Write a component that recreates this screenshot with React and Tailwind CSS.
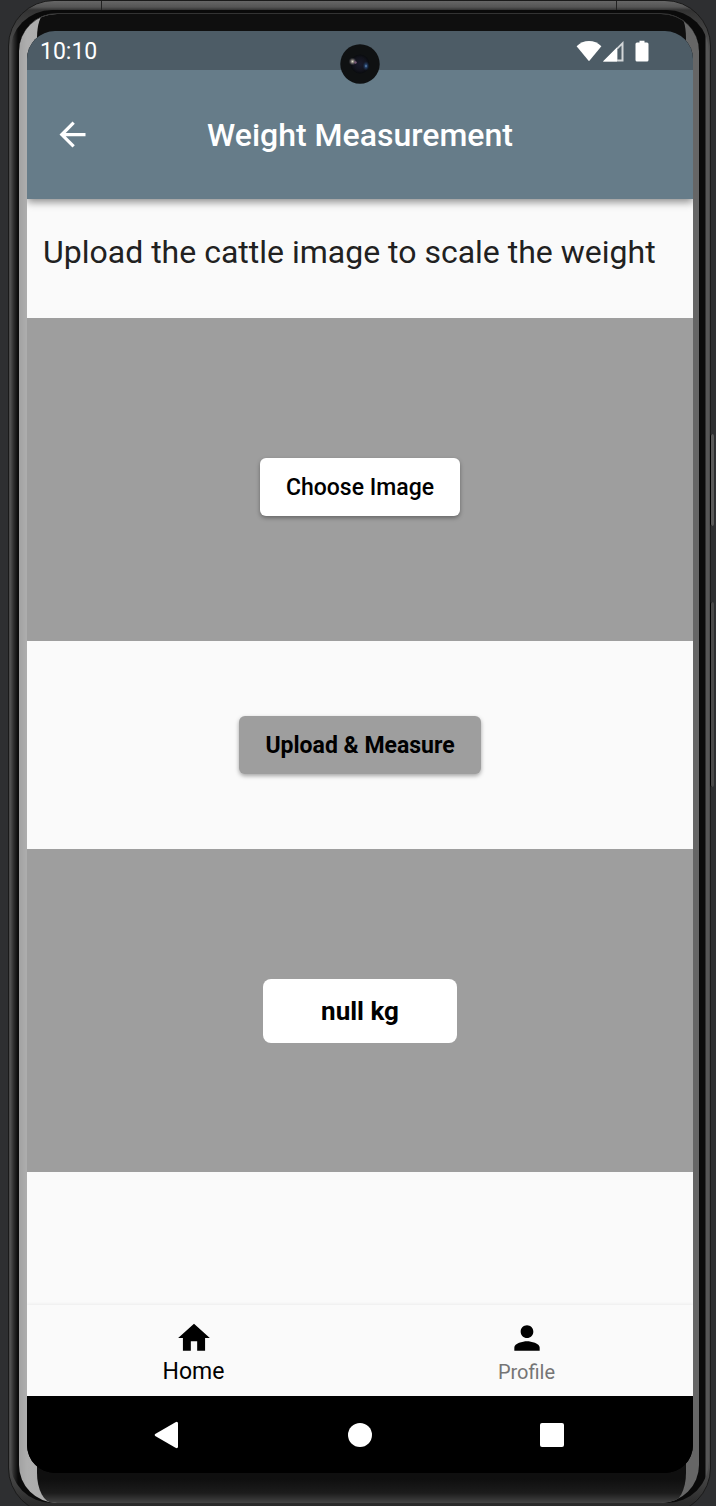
import React from "react";

function StatusBar() {
  return (
    <div className="relative z-20 flex h-[39px] shrink-0 items-center justify-between bg-[#4d5c66] pl-[13px] pr-[43px] text-white">
      <span className="pt-[2px] text-[23px] leading-[26px]">10:10</span>
      <div className="flex items-center">
        <svg className="h-[22px] w-[26px]" viewBox="0 0 26 22" fill="currentColor" aria-hidden="true">
          <path d="M13 21.2 .6 6.2C4 2.8 8.300 1 13 1s9 1.800 12.400 5.200z" />
        </svg>
        <svg className="h-[22px] w-[22px]" viewBox="0 0 22 22" aria-hidden="true">
          <path d="M21.500 1v20.500H1z" fill="#fff" fillOpacity=".75" />
          <path d="M15 7.500v14H1z" fill="#fff" />
          <path d="M15.500 9.500 19.500 5.500v14h-4z" fill="#4d5c66" />
        </svg>
        <svg className="ml-[10px] h-[22px] w-[16px]" viewBox="0 0 16 22" fill="currentColor" aria-hidden="true">
          <path d="M5.500.8h5v1.700h2.500a1.500 1.500 0 0 1 1.500 1.500v16a1.500 1.500 0 0 1-1.500 1.500H3A1.500 1.500 0 0 1 1.500 20V4A1.500 1.500 0 0 1 3 2.500h2.500z" />
        </svg>
      </div>
    </div>
  );
}

function Camera() {
  return (
    <div className="absolute left-1/2 top-[13px] z-30 size-10 -translate-x-1/2">
      <svg viewBox="0 0 40 40" className="size-10" aria-hidden="true">
        <defs>
          <radialGradient id="lens">
            <stop offset="0" stopColor="#191a2b" />
            <stop offset=".7" stopColor="#12131c" />
            <stop offset="1" stopColor="#090b0e" />
          </radialGradient>
          <radialGradient id="glint">
            <stop offset="0" stopColor="#e0dccb" />
            <stop offset=".4" stopColor="#77736c" />
            <stop offset="1" stopColor="#3b3a4a" stopOpacity="0" />
          </radialGradient>
          <radialGradient id="blueGlint">
            <stop offset="0" stopColor="#8db4dc" />
            <stop offset=".25" stopColor="#2c4c78" />
            <stop offset="1" stopColor="#14233d" stopOpacity="0" />
          </radialGradient>
        </defs>
        <circle cx="20" cy="20" r="19.700" fill="#0f1112" />
        <circle cx="20" cy="20" r="9.500" fill="url(#lens)" />
        <circle cx="12.500" cy="17.500" r="4" fill="url(#glint)" />
        <circle cx="15.500" cy="18.500" r="1.200" fill="#7a5a78" />
        <ellipse cx="26" cy="22" rx="3.500" ry="5" fill="url(#blueGlint)" />
      </svg>
    </div>
  );
}

function AppBar() {
  return (
    <header className="relative z-10 grid h-[129px] shrink-0 grid-cols-[90px_1fr_90px] items-center bg-[#667c89] shadow-[0_3px_8px_rgba(0,0,0,0.45)]">
      <button type="button" aria-label="Back" className="justify-self-center text-white">
        <svg className="size-[39px]" viewBox="0 0 24 24" fill="currentColor" aria-hidden="true">
          <path d="M20 11H7.830l5.590-5.590L12 4l-8 8 8 8 1.410-1.410L7.830 13H20v-2z" />
        </svg>
      </button>
      <h1 className="text-center text-[32px] font-medium leading-[38px] text-white">Weight Measurement</h1>
    </header>
  );
}

function BottomNav() {
  return (
    <nav className="grid h-[91px] shrink-0 grid-cols-2 bg-[#fafafa] shadow-[0_-1px_3px_rgba(0,0,0,0.06)]">
      <a href="#home" className="flex flex-col items-center pt-[14px] text-black">
        <svg className="size-[38px]" viewBox="0 0 24 24" fill="currentColor" aria-hidden="true">
          <path d="M10 20v-6h4v6h5v-8h3L12 3 2 12h3v8z" />
        </svg>
        <span className="text-[23px] leading-[30px]">Home</span>
      </a>
      <a href="#profile" className="flex flex-col items-center pt-[14px] text-[#757575]">
        <svg className="size-[38px] text-black" viewBox="0 0 24 24" fill="currentColor" aria-hidden="true">
          <path d="M12 12c2.210 0 4-1.790 4-4s-1.790-4-4-4-4 1.790-4 4 1.790 4 4 4zm0 2c-2.670 0-8 1.340-8 4v2h16v-2c0-2.660-5.330-4-8-4z" />
        </svg>
        <span className="text-[20px] leading-[30px]">Profile</span>
      </a>
    </nav>
  );
}

function SystemNav() {
  return (
    <div className="grid h-[77px] shrink-0 grid-cols-[192px_192px_192px] items-center justify-center bg-black text-white">
      <button type="button" aria-label="System back" className="justify-self-center">
        <svg className="size-7" viewBox="0 0 28 28" fill="currentColor" aria-hidden="true">
          <path d="M1.200 13 21.500 1.200Q24 0 24 2.500v23Q24 28 21.500 26.800L1.200 15Q0 14 1.200 13z" />
        </svg>
      </button>
      <button type="button" aria-label="System home" className="size-6 justify-self-center rounded-full bg-white" />
      <button type="button" aria-label="Recent apps" className="size-6 justify-self-center rounded-[2px] bg-white" />
    </div>
  );
}

function Screen() {
  return (
    <div className="relative flex flex-1 flex-col overflow-hidden rounded-[28px] bg-black">
      <Camera />
      <StatusBar />
      <AppBar />
      <main className="flex flex-1 flex-col bg-[#fafafa]">
        <p className="px-4 pb-[47px] pt-[34px] text-[32px] leading-[38px] text-[#212121]">
          Upload the cattle image to scale the weight
        </p>
        <section className="flex h-[323px] items-center justify-center bg-[#9e9e9e] pt-[14px]">
          <button
            type="button"
            className="h-[58px] rounded-md bg-white px-[26px] pt-[2px] text-[23px] font-medium leading-[28px] text-black shadow-[0_2px_4px_rgba(0,0,0,0.35)]"
          >
            Choose Image
          </button>
        </section>
        <section className="flex h-[208px] items-center justify-center">
          <button
            type="button"
            className="h-[58px] rounded-md bg-[#9e9e9e] px-[26px] pt-[2px] text-[23px] font-bold leading-[28px] text-black shadow-[0_2px_4px_rgba(0,0,0,0.35)]"
          >
            Upload &amp; Measure
          </button>
        </section>
        <section className="flex h-[323px] items-center justify-center bg-[#9e9e9e]">
          <output className="flex h-16 w-[194px] items-center justify-center rounded-lg bg-white text-[26px] font-bold leading-[32px] text-black">
            null kg
          </output>
        </section>
      </main>
      <BottomNav />
      <SystemNav />
    </div>
  );
}

export default function App() {
  return (
    <div className="flex min-h-screen flex-col overflow-hidden bg-[#2e2f31] pl-2 pr-[5px] font-['Roboto',sans-serif]">
      <div className="relative -mb-2 flex flex-1 flex-col rounded-[46px] border border-[#1a1a1a] bg-[linear-gradient(to_bottom,#666_0,#555_6px,#333_9px,#4a4a4a_40px,#4a4a4a_calc(100%_-_40px),#222_100%)] px-px pb-[10px] pt-[9px]">
        <span className="absolute left-[92px] top-0 h-[9px] w-px bg-[#222]" />
        <span className="absolute right-[93px] top-0 h-[9px] w-px bg-[#222]" />
        <span className="absolute -right-[4px] top-[433px] h-[92px] w-[4px] rounded-sm border-l border-black bg-[#5a5a5a]" />
        <span className="absolute -right-[4px] top-[601px] h-[185px] w-[4px] rounded-sm border-l border-black bg-[#4a4a4a]" />
        <div className="flex flex-1 flex-col rounded-[42px] bg-[linear-gradient(to_right,#555_0,#2a2a2a_4px,#0a0a0a_8px,#0a0a0a_calc(100%_-_4px),#555_calc(100%_-_3px))] pl-[9px] pr-[10px] pt-[3px]">
          <div className="relative flex flex-1 flex-col overflow-hidden rounded-[38px] border-t border-[#333] bg-[linear-gradient(to_right,#a2a2a2_0,#aeaeae_8px,#888_50%,#666_calc(100%_-_8px),#666_100%)] pb-[30px] pl-2 pr-[6px] pt-[17px]">
            <span className="absolute bottom-0 left-[18px] right-[13px] top-0 rounded-[8px_8px_16px_16px/24px_24px_30px_30px] bg-[linear-gradient(to_bottom,#0f0f0f_0,#0f0f0f_calc(100%_-_24px),#1c1c1c_calc(100%_-_10px),#444_100%)]" />
            <Screen />
          </div>
        </div>
      </div>
    </div>
  );
}
